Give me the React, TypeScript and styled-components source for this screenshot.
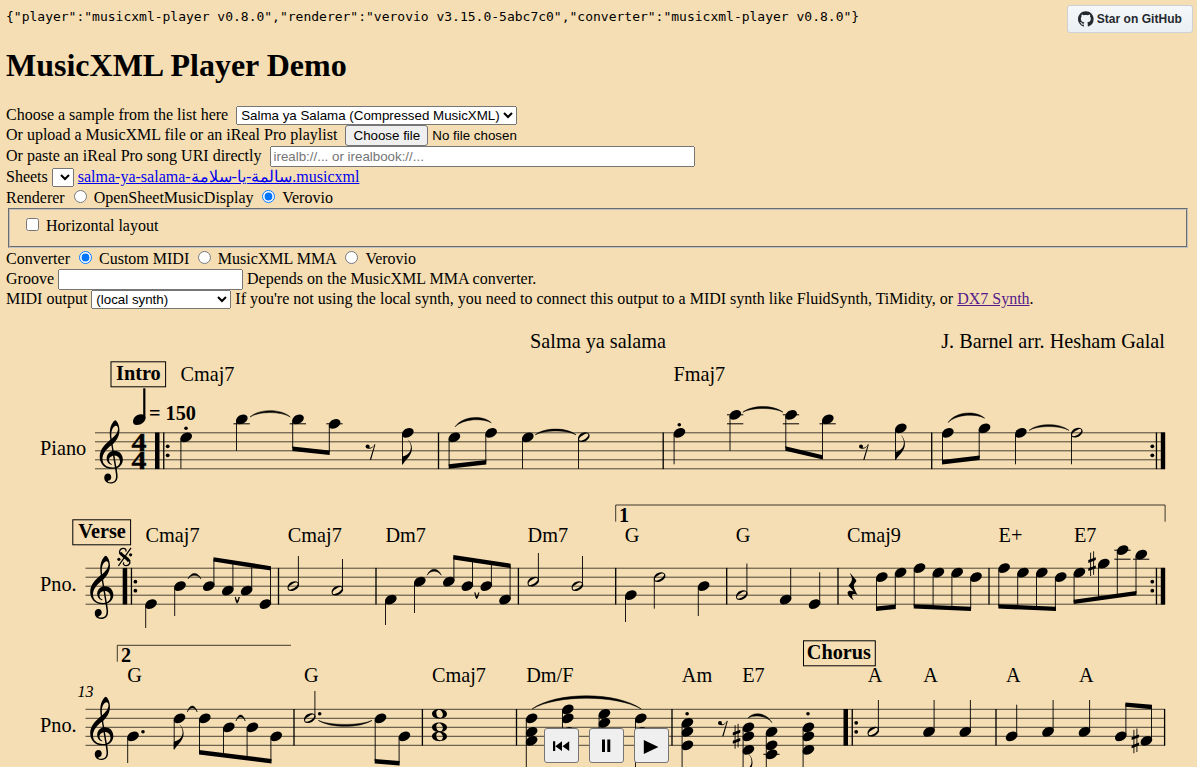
import React from 'react';
import styled, { createGlobalStyle } from 'styled-components';

const GlobalStyle = createGlobalStyle`
  html, body { margin: 0; padding: 0; background: wheat; }
  body {
    font-family: "Liberation Serif", "Times New Roman", serif;
    font-size: 16px;
    color: #000;
    overflow: hidden;
  }
`;

const Page = styled.div`
  height: 767px;
  overflow: hidden;
  background: wheat;
`;

const Header = styled.header`
  height: 310px;
  padding: 0 8px 0 6px;
  box-sizing: border-box;
`;

const Versions = styled.pre`
  margin: 0;
  padding-top: 9px;
  font: 13px/16px "DejaVu Sans Mono", monospace;
`;

const Title = styled.h1`
  margin: 22px 0 23px;
  font-size: 32px;
  line-height: 36px;
  font-weight: bold;
`;

const Row = styled.div<{ $height: number }>`
  display: flex;
  align-items: baseline;
  height: ${(p) => p.$height}px;
  line-height: 18px;
  white-space: pre;
`;

const Select = styled.select<{ $width: number; $gap?: number }>`
  width: ${(p) => p.$width}px;
  height: 19px;
  margin: 0 4px 0 ${(p) => p.$gap ?? 4}px;
  font: 13.333px "Liberation Sans", Arial, sans-serif;
  box-sizing: border-box;
`;

const TextInput = styled.input<{ $width: number; $gap?: number }>`
  width: ${(p) => p.$width}px;
  height: 21px;
  margin: 0 4px 0 ${(p) => p.$gap ?? 4}px;
  box-sizing: border-box;
  font: 13.333px "Liberation Sans", Arial, sans-serif;
`;

const FilePicker = styled.span`
  display: flex;
  align-items: baseline;
  gap: 4px;
  margin-left: 8px;
  font: 13.333px "Liberation Sans", Arial, sans-serif;
`;

const FileButton = styled.button`
  height: 21px;
  width: 83px;
  padding: 0;
  box-sizing: border-box;
  border: 1px solid #767676;
  border-radius: 3px;
  background: #efefef;
  color: #000;
  font: inherit;
`;

const Radio = styled.input`
  margin: 3px 7px 0 9px;
  width: 13px;
  height: 13px;

  & ~ & { margin-left: 8.6px; }
`;

const Checkbox = styled.input`
  margin: 3px 7px 3px 4px;
  width: 13px;
  height: 13px;
`;

const Options = styled.fieldset`
  margin: 0 1px 0 2px;
  height: 40px;
  box-sizing: border-box;
  padding: 5px 12px 0;
  border: 2px groove #c0c0c0;
`;

const Link = styled.a<{ $visited?: boolean }>`
  color: ${(p) => (p.$visited ? '#551a8b' : '#0000ee')};
  text-decoration: underline;
`;

const StarButton = styled.a`
  position: absolute;
  top: 5px;
  left: 1067px;
  width: 126px;
  height: 28px;
  box-sizing: border-box;
  display: flex;
  align-items: center;
  gap: 3px;
  padding: 0 10px;
  border: 1px solid #ccd1d5;
  border-radius: 3px;
  background: linear-gradient(180deg, #f6f8fa, #ebf0f4 90%);
  color: #24292f;
  font: bold 12px "Liberation Sans", Arial, sans-serif;
  letter-spacing: 0.05px;
  white-space: nowrap;
`;

const Transport = styled.div`
  position: absolute;
  left: 544px;
  top: 728px;
  display: flex;
  gap: 10px;
`;

const TransportButton = styled.button`
  width: 35px;
  height: 35px;
  padding: 0;
  border: 1px solid #767676;
  border-radius: 3px;
  background: #efefef;
  display: flex;
`;

const Sheet = styled.svg`
  display: block;
  font-family: "Liberation Serif", "Times New Roman", serif;
  font-size: 20.25px;
`;

const TOP = 310;
const HEAD = 'M0 -39c0 68 73 172 200 172c66 0 114 -37 114 -95c0 -84 -106 -171 -218 -171c-64 0 -96 30 -96 94z';
const HALF = 'M278 64c0 22 -17 39 -43 39c-12 0 -26 -3 -41 -10c-85 -43 -165 -94 -165 -156c5 -25 15 -32 49 -32c67 11 200 95 200 159zM0 -36c0 68 73 174 200 174c66 0 114 -39 114 -97c0 -84 -106 -173 -218 -173c-64 0 -96 32 -96 96z';
const WHOLE = 'M198 133c102 0 207 -45 207 -133c0 -92 -98 -133 -207 -133c-101 0 -198 46 -198 133c0 88 93 133 198 133zM293 -21c0 14 -3 29 -8 44c-7 20 -18 38 -33 54c-20 21 -43 31 -68 31l-20 -2c-15 -5 -27 -14 -36 -28c-4 -9 -6 -17 -8 -24s-3 -16 -3 -27c0 -15 3 -34 9 -57s18 -41 34 -55c15 -15 36 -23 62 -23c4 0 10 1 18 2c19 5 32 15 40 30s13 34 13 55z';
const CLEF = 'M364 -252c-245 0 -364 165 -364 339c0 202 153 345 297 464c12 10 11 12 9 24c-7 41 -14 106 -14 164c0 104 24 229 98 311c20 22 51 48 65 48c11 0 37 -28 52 -50c41 -60 65 -146 65 -233c0 -153 -82 -280 -190 -381c-6 -6 -8 -7 -6 -19l25 -145c3 -18 3 -18 29 -18c147 0 241 -113 241 -241c0 -113 -67 -198 -168 -238c-14 -6 -15 -5 -13 -17c11 -62 29 -157 29 -214c0 -170 -130 -200 -197 -200c-151 0 -190 98 -190 163c0 62 40 115 107 115c61 0 96 -47 96 -102c0 -58 -36 -85 -67 -94c-23 -7 -32 -10 -32 -17c0 -13 26 -29 80 -29c59 0 158 18 158 166c0 47 -15 134 -27 201c-2 12 -4 11 -15 9c-20 -4 -46 -6 -69 -6zM80 20c0 -139 113 -236 288 -236c20 0 40 2 56 5c15 3 16 3 14 14l-50 298c-2 11 -4 12 -20 8c-61 -17 -100 -60 -100 -117c0 -46 30 -89 72 -107c7 -3 15 -6 15 -13c0 -6 -4 -11 -12 -11c-7 0 -19 3 -27 6c-68 23 -115 87 -115 177c0 85 57 164 145 194c18 6 18 5 15 24l-21 128c-2 11 -4 12 -14 4c-47 -38 -93 -75 -153 -142c-83 -94 -93 -173 -93 -232zM470 943c-61 0 -133 -96 -133 -252c0 -32 2 -66 6 -92c2 -13 6 -14 13 -8c79 69 174 159 174 270c0 55 -27 82 -60 82zM441 117c-12 1 -13 -2 -11 -14l49 -285c2 -12 4 -12 16 -6c56 28 94 79 94 142c0 88 -67 156 -148 163z';

type Kind = 'q' | 'h' | 'w';
// x of the head's left edge, steps below the top line, stem end (page y), kind
type Note = { x: number; s: number[]; end?: number; up?: boolean; kind?: Kind; flag?: boolean };
const n = (x: number, s: number | number[], end?: number, up = false, kind: Kind = 'q', flag = false): Note => ({
  x, s: Array.isArray(s) ? s : [s], end, up, kind, flag,
});

const NoteMark = ({ note, y0 }: { note: Note; y0: number }) => {
  const { x, s, end, up, kind, flag } = note;
  const ys = s.map((v) => y0 + v * 4.5);
  const path = kind === 'h' ? HALF : kind === 'w' ? WHOLE : HEAD;
  const top = Math.min(...s);
  const low = Math.max(...s);
  const ledgers: number[] = [];
  for (let l = -2; l >= top; l -= 2) ledgers.push(l);
  for (let l = 10; l <= low; l += 2) ledgers.push(l);
  const sx = up ? x + 10.9 : x + 0.5;
  return (
    <g>
      {ledgers.map((l) => (
        <line key={l} x1={x - 2.5} x2={x + 13.8} y1={y0 + l * 4.5} y2={y0 + l * 4.5} stroke="#000" strokeWidth={1} />
      ))}
      {end !== undefined && (
        <line x1={sx} x2={sx} y1={up ? Math.max(...ys) - 1.2 : Math.min(...ys) + 1.2} y2={end} stroke="#000" strokeWidth={0.9} />
      )}
      {ys.map((y) => (
        <path key={y} d={path} transform={`translate(${x} ${y}) scale(.037 -.0365)`} />
      ))}
      {flag && end !== undefined && (
        <path
          transform={`translate(${sx - 0.4} ${end})`}
          d="M0 0V-7.5C3.5-8.3 8.8-11 8.8-17C8.8-20.5 7.2-23.3 5.2-25.3C8-23 9.8-20 9.8-15.8C9.8-9 4.2-5.4.8 0Z"
        />
      )}
    </g>
  );
};

type Beam = [number, number, number, number];
type Arc = [number, number, number, number, number, number, number?];

const BeamMark = ({ b: [x1, y1, x2, y2] }: { b: Beam }) => (
  <path d={`M${x1} ${y1}L${x2} ${y2}V${y2 + 4.4}L${x1} ${y1 + 4.4}Z`} />
);

// ends, then the point the curve passes through at its middle
const ArcMark = ({ a: [x1, y1, mx, my, x2, y2, t = 1.9] }: { a: Arc }) => {
  const cy = (off: number) => my + off + ((my + off) - (y1 + y2) / 2) / 3;
  const a = x1 + (mx - x1) * 0.45;
  const b = x2 - (x2 - mx) * 0.45;
  return (
    <path
      d={`M${x1} ${y1}C${a} ${cy(-t / 2)} ${b} ${cy(-t / 2)} ${x2} ${y2}C${b} ${cy(t / 2)} ${a} ${cy(t / 2)} ${x1} ${y1}Z`}
      stroke="#000"
      strokeWidth={0.5}
    />
  );
};

const Sharp = ({ x, y }: { x: number; y: number }) => (
  <g transform={`translate(${x} ${y})`}>
    <path d="M2.3-11V12.5M5.3-12.3V11.2" stroke="#000" strokeWidth={0.9} />
    <path d="M0-2.6L7.5-5.4V-2.5L0 .3ZM0 5.6L7.5 2.8V5.7L0 8.5Z" transform="translate(0 -1)" />
  </g>
);

const EighthRest = ({ x, y }: { x: number; y: number }) => (
  <g transform={`translate(${x} ${y})`}>
    <circle cx={2} cy={2.1} r={2} />
    <path d="M.8 3.2C3.5 5.5 6.8 4.5 8.8 .5L4.2 15.4H5.5L9.8.2 8.9 0C7.5 2.6 5.5 3.8 3.5 3.2Z" />
  </g>
);

const QuarterRest = ({ x, y }: { x: number; y: number }) => (
  <path
    transform={`translate(${x} ${y})`}
    d="M2.6 0L8.8 7.2C9.3 8 8.8 9 7.5 10.5C5.8 12.8 6.2 14.8 10.3 22.3C8 20.8 5.5 20.8 4.8 22.3C4.3 24 5.5 26 6.5 27.6C3 25.5 0 22 .3 19.8C.8 17.8 3.5 17.5 6.3 18.9L1.2 12.8C3.5 10.5 5.2 7.5 4.5 5C4 3 3 1.5 2.6 0Z"
  />
);

const Segno = ({ x, y }: { x: number; y: number }) => (
  <g transform={`translate(${x} ${y})`} fill="none" stroke="#000">
    <path d="M8.6 3.9C9.4 1.6 7.6.7 5.8.8C3 1 1.8 3.4 2.6 5.6M12.4 13C13.2 15.4 12 17.8 9.2 18C7.2 18.1 5.6 17 6.4 14.8" strokeWidth={1.3} />
    <path d="M3 5C4.2 8.6 10.6 10 12 13.8" strokeWidth={3.1} />
    <path d="M1.2 18.4L13.8.3" strokeWidth={1.3} />
    <circle cx={1.7} cy={11.7} r={1.6} fill="#000" stroke="none" />
    <circle cx={13.4} cy={7.2} r={1.6} fill="#000" stroke="none" />
  </g>
);

type SystemData = {
  y0: number; left: number; label: string; labelY: number; clefX: number;
  bars: number[]; notes: Note[]; beams: Beam[]; arcs: Arc[];
  chords: [number, string][]; chordY: number;
  dots: [number, number][];
};

const StartRepeat = ({ x, y0 }: { x: number; y0: number }) => (
  <g>
    <rect x={x} y={y0 - 0.3} width={4.5} height={36.6} />
    <rect x={x + 8.1} y={y0 - 0.3} width={1.3} height={36.6} />
    <circle cx={x + 12.7} cy={y0 + 13.5} r={1.9} />
    <circle cx={x + 12.7} cy={y0 + 22.5} r={1.9} />
  </g>
);

const EndRepeat = ({ y0 }: { y0: number }) => (
  <g>
    <circle cx={1152.3} cy={y0 + 13.5} r={1.9} />
    <circle cx={1152.3} cy={y0 + 22.5} r={1.9} />
    <rect x={1155.8} y={y0 - 0.3} width={1.3} height={36.6} />
    <rect x={1160.8} y={y0 - 0.3} width={4.4} height={36.6} />
  </g>
);

const System = ({ d, children }: { d: SystemData; children?: React.ReactNode }) => (
  <g>
    {[0, 1, 2, 3, 4].map((i) => (
      <line key={i} x1={d.left} x2={1165} y1={d.y0 + i * 9} y2={d.y0 + i * 9} stroke="#000" strokeWidth={0.7} />
    ))}
    <text x={40} y={d.labelY}>{d.label}</text>
    <path d={CLEF} transform={`translate(${d.clefX} ${d.y0 + 27}) scale(.0345 -.036)`} />
    {d.bars.map((x) => (
      <rect key={x} x={x - 0.65} y={d.y0 - 0.3} width={1.3} height={36.6} />
    ))}
    {d.notes.map((note, i) => <NoteMark key={i} note={note} y0={d.y0} />)}
    {d.beams.map((b, i) => <BeamMark key={i} b={b} />)}
    {d.arcs.map((a, i) => <ArcMark key={i} a={a} />)}
    {d.dots.map(([x, y], i) => <circle key={i} cx={x} cy={y} r={1.8} />)}
    {d.chords.map(([x, t], i) => <text key={i} x={x} y={d.chordY}>{t}</text>)}
    {children}
  </g>
);

const Boxed = ({ x, y, w, tx, text }: { x: number; y: number; w: number; tx: number; text: string }) => (
  <g>
    <rect x={x} y={y} width={w} height={25} fill="none" stroke="#000" strokeWidth={1} />
    <text x={tx} y={y + 18.2} fontWeight="bold">{text}</text>
  </g>
);

const intro: SystemData = {
  y0: 432.8, left: 95, label: 'Piano', labelY: 455, clefX: 99.7,
  bars: [438.5, 663.2, 931.7],
  notes: [
    n(180.4, 1, 468.7), n(236, -3, 450.8), n(292.2, -3, 448), n(328.8, -2, 452), n(402, 0, 464.3, false, 'q', true),
    n(448.6, 1, 466), n(485.3, 0, 462), n(522, 1, 468.7), n(578, 1, 468.7, false, 'h'),
    n(673.6, 0, 464.3), n(729.5, -4, 450.8), n(785.3, -4, 448), n(822, -3, 457), n(895, -1, 459.7, false, 'q', true),
    n(942, 0, 462), n(978.7, -1, 458), n(1015, 0, 464.3), n(1071, 0, 464.3, false, 'h'),
  ],
  beams: [[292.3, 446.6, 329.7, 450.6], [448.7, 464.3, 486.3, 460], [785.3, 446.3, 823, 455.2], [942, 460, 979.7, 455.6]],
  arcs: [
    [250, 417, 270, 411.6, 290.3, 417], [455, 426.8, 474, 418.7, 491.3, 422.8, 2.2], [535.2, 434.8, 556, 430, 576, 434.8],
    [742.8, 412.2, 763, 407.5, 783, 412.2], [948, 422.5, 967, 414.2, 984.6, 418.2, 2.2], [1029, 430.4, 1048.5, 425.6, 1069, 430.4],
  ],
  chords: [[180.4, 'Cmaj7'], [673.4, 'Fmaj7']], chordY: 381.4,
  dots: [[186, 428.3], [679.3, 424.8]],
};

const verse: SystemData = {
  y0: 568.2, left: 85.5, label: 'Pno.', labelY: 591, clefX: 90.2,
  bars: [278.5, 376, 518.4, 615.7, 726.7, 838, 989],
  notes: [
    n(145.2, 8, 628), n(174.2, 4, 616), n(203, 4, 559, true), n(222, 5, 562, true), n(240.8, 5, 565, true), n(259.6, 8, 568, true),
    n(287.5, 4, 556, true, 'h'), n(331.6, 5, 559, true, 'h'),
    n(385, 7, 625), n(414, 3, 613), n(443, 3, 557, true), n(461.6, 4, 560, true), n(480.5, 4, 562, true), n(499.2, 7, 566, true),
    n(527.5, 3, 553, true, 'h'), n(571.6, 4, 556, true, 'h'),
    n(625, 6, 622), n(653.8, 2, 608.7, false, 'h'), n(697.8, 4, 616),
    n(736, 6, 563.5, true, 'h'), n(779.8, 7, 568, true), n(808.8, 8, 572.3, true),
    n(876, 2, 608), n(894.8, 1, 606), n(913.7, 0, 606), n(932.6, 1, 607), n(951.4, 1, 608), n(970.2, 2, 609),
    n(998.3, 0, 606), n(1017.2, 1, 607), n(1036, 1, 608), n(1054.9, 2, 609),
    n(1073.6, 1, 602), n(1098, -1, 598), n(1116.8, -4, 595), n(1135.5, -3, 593),
  ],
  beams: [
    [213.5, 557.2, 271, 566.2], [453.3, 555, 510.7, 563.7], [876, 606.6, 895.8, 604.6], [913.7, 604.2, 971, 606.7],
    [998.3, 604.2, 1056, 606.7], [1073.6, 599.7, 1136.5, 590.9],
  ],
  arcs: [[188, 579, 194.3, 574.4, 201, 579], [427.2, 575.2, 434.2, 570.2, 441.2, 575.2]],
  chords: [[145.6, 'Cmaj7'], [287.8, 'Cmaj7'], [385.4, 'Dm7'], [527.6, 'Dm7'], [624.8, 'G'], [735.8, 'G'], [847, 'Cmaj9'], [998.6, 'E+'], [1074, 'E7']],
  chordY: 542,
  dots: [],
};

const chorus: SystemData = {
  y0: 709.3, left: 85.5, label: 'Pno.', labelY: 732, clefX: 90.2,
  bars: [294, 422.4, 516.5, 672, 996, 1164.6],
  notes: [
    n(127.2, 6, 763), n(173.7, 2, 749.3, false, 'q', true), n(199, 2, 752), n(223, 4, 755), n(246.6, 4, 758), n(270.4, 6, 761),
    n(304, 2, 691, true, 'h'), n(374.7, 2, 761), n(398.6, 6, 763),
    n(432, [1, 4, 6], undefined, false, 'w'),
    n(525.8, [2, 5, 7], 767), n(562, [0, 2, 5], 760), n(598.6, [1, 3, 6], 760), n(635, [2, 5], 767),
    n(681.6, [3, 5, 8], 770), n(742.6, [4, 6, 9], 778.5, false, 'q', true), n(765.8, [5, 8, 10], 780), n(802.6, [4, 6, 9], 780),
    n(867.5, 5, 700, true, 'h'), n(923.2, 5, 700, true), n(959.5, 5, 700, true),
    n(1005.8, 6, 704.7, true), n(1042.2, 5, 700, true), n(1078.7, 5, 700, true), n(1115, 6, 704, true), n(1140.6, 7, 706, true),
  ],
  beams: [[199, 750, 271.5, 759], [374.7, 759, 399.6, 761], [1125.4, 702.4, 1152, 704.8]],
  arcs: [
    [187.3, 712, 192.3, 707, 197.2, 712], [236, 721, 240.6, 716, 245.2, 721], [318.3, 720.4, 345, 725.4, 372, 720.4],
    [532, 709, 586, 697, 641.3, 709, 2.4], [748, 718.2, 758, 715, 772, 722.6, 2.2],
  ],
  chords: [[127.3, 'G'], [304, 'G'], [432, 'Cmaj7'], [526.2, 'Dm/F'], [681.8, 'Am'], [742.2, 'E7'], [867.8, 'A'], [923.2, 'A'], [1006, 'A'], [1079, 'A']],
  chordY: 682,
  dots: [[143, 731.7], [319.7, 713.7], [687.1, 713.7], [808, 713.7]],
};

const Score = () => (
  <Sheet width={1197} height={457} viewBox={`0 ${TOP} 1197 457`}>
    <text x={530} y={348.2}>Salma ya salama</text>
    <text x={1165} y={348.2} textAnchor="end">J. Barnel arr. Hesham Galal</text>

    <System d={intro}>
      <Boxed x={111} y={361.8} w={54.6} tx={116} text="Intro" />
      <path d={HEAD} transform="translate(133 419.6) scale(.04 -.041)" />
      <rect x={143.2} y={388.3} width={2.2} height={30} />
      <text x={149} y={420} fontWeight="bold">= 150</text>
      <g fontWeight="bold" fontSize={26.2} textAnchor="middle" stroke="#000" strokeWidth={0.4}>
        <text transform="translate(139 450.5) scale(1.14 1)">4</text>
        <text transform="translate(139 468.6) scale(1.14 1)">4</text>
      </g>
      <StartRepeat x={155} y0={intro.y0} />
      <EndRepeat y0={intro.y0} />
      <EighthRest x={365.6} y={444.3} />
      <EighthRest x={859} y={444.3} />
    </System>

    <System d={verse}>
      <Boxed x={72.8} y={519.8} w={57.8} tx={78.2} text="Verse" />
      <Segno x={117.2} y={547.6} />
      <StartRepeat x={122.7} y0={verse.y0} />
      <EndRepeat y0={verse.y0} />
      <path d="M615.7 521.7V505H1165.1V521.7" fill="none" stroke="#000" strokeWidth={0.75} />
      <text x={619} y={522} fontWeight="bold">1</text>
      <path d="M235.3 597C235.6 600 236.3 602.4 237.1 603.2C238 602.4 238.9 600 239.2 597C238.5 599 237.9 600.3 237.2 601C236.4 600.3 235.9 599 235.3 597Z" stroke="#000" strokeWidth={0.8} />
      <path d="M474.9 592.5C475.2 595.5 475.9 597.9 476.7 598.7C477.6 597.9 478.5 595.5 478.8 592.5C478.1 594.5 477.5 595.8 476.8 596.5C476 595.8 475.5 594.5 474.9 592.5Z" stroke="#000" strokeWidth={0.8} />
      <QuarterRest x={847.3} y={572.7} />
      <Sharp x={1088.3} y={563.6} />
    </System>

    <System d={chorus}>
      <Boxed x={803.5} y={640.8} w={71.8} tx={806.8} text="Chorus" />
      <path d="M117.3 661.7V645.3H291" fill="none" stroke="#000" strokeWidth={0.75} />
      <text x={121} y={662} fontWeight="bold">2</text>
      <text x={77.6} y={697} fontSize={16} fontStyle="italic">13</text>
      <EighthRest x={718} y={720.8} />
      <Sharp x={732.8} y={736.2} />
      <Sharp x={1131.6} y={740.8} />
      <StartRepeat x={843.5} y0={chorus.y0} />
    </System>
  </Sheet>
);

export default function App() {
  return (
    <Page>
      <GlobalStyle />
      <Header>
        <Versions>{'{"player":"musicxml-player v0.8.0","renderer":"verovio v3.15.0-5abc7c0","converter":"musicxml-player v0.8.0"}'}</Versions>
        <Title>MusicXML Player Demo</Title>
        <Row $height={19}>
          Choose a sample from the list here
          <Select $width={281} $gap={8}><option>Salma ya Salama (Compressed MusicXML)</option></Select>
        </Row>
        <Row $height={21}>
          Or upload a MusicXML file or an iReal Pro playlist
          <FilePicker>
            <FileButton>Choose file</FileButton>
            No file chosen
          </FilePicker>
        </Row>
        <Row $height={22}>
          Or paste an iReal Pro song URI directly
          <TextInput $width={425} $gap={8} placeholder="irealb://... or irealbook://..." />
        </Row>
        <Row $height={19}>
          Sheets
          <Select $width={22} />
          <Link>salma-ya-salama-سالمة-يا-سلامة.musicxml</Link>
        </Row>
        <Row $height={21}>
          Renderer
          <Radio type="radio" name="renderer" />OpenSheetMusicDisplay
          <Radio type="radio" name="renderer" defaultChecked />Verovio
        </Row>
        <Options>
          <Row $height={20}><Checkbox type="checkbox" />Horizontal layout</Row>
        </Options>
        <Row $height={21}>
          Converter
          <Radio type="radio" name="converter" defaultChecked />Custom MIDI
          <Radio type="radio" name="converter" />MusicXML MMA
          <Radio type="radio" name="converter" />Verovio
        </Row>
        <Row $height={21}>
          Groove
          <TextInput $width={185} />
          Depends on the MusicXML MMA converter.
        </Row>
        <Row $height={20}>
          MIDI output
          <Select $width={140}><option>(local synth)</option></Select>
          {"If you're not using the local synth, you need to connect this output to a MIDI synth like FluidSynth, TiMidity, or "}
          <Link $visited>DX7 Synth</Link>.
        </Row>
      </Header>
      <Score />
      <StarButton>
        <svg width={16} height={16} viewBox="0 0 16 16" fill="#24292f">
          <path d="M8 0C3.58 0 0 3.58 0 8c0 3.54 2.29 6.53 5.47 7.59.4.07.55-.17.55-.38 0-.19-.01-.82-.01-1.49-2.01.37-2.53-.49-2.69-.94-.09-.23-.48-.94-.82-1.13-.28-.15-.68-.52-.01-.53.63-.01 1.08.58 1.23.82.72 1.21 1.87.87 2.33.66.07-.52.28-.87.51-1.07-1.78-.2-3.64-.89-3.64-3.95 0-.87.31-1.59.82-2.15-.08-.2-.36-1.02.08-2.12 0 0 .67-.21 2.2.82.64-.18 1.32-.27 2-.27s1.36.09 2 .27c1.53-1.04 2.2-.82 2.2-.82.44 1.1.16 1.92.08 2.12.51.56.82 1.27.82 2.15 0 3.07-1.87 3.75-3.65 3.95.29.25.54.73.54 1.48 0 1.07-.01 1.93-.01 2.2 0 .21.15.46.55.38A8.01 8.01 0 0 0 16 8c0-4.42-3.58-8-8-8z" />
        </svg>
        Star on GitHub
      </StarButton>
      <Transport>
        <TransportButton aria-label="Rewind">
          <svg width={33} height={33}><path d="M8 12.3H10.2V22H8ZM17 12.3V22L10.3 17.2ZM24.2 12.3V22L17.5 17.2Z" /></svg>
        </TransportButton>
        <TransportButton aria-label="Pause">
          <svg width={33} height={33}><path d="M12 10.4H15V23H12ZM17.3 10.4H20.3V23H17.3Z" /></svg>
        </TransportButton>
        <TransportButton aria-label="Play">
          <svg width={33} height={33}><path d="M8.8 11V25L23.4 18Z" /></svg>
        </TransportButton>
      </Transport>
    </Page>
  );
}
